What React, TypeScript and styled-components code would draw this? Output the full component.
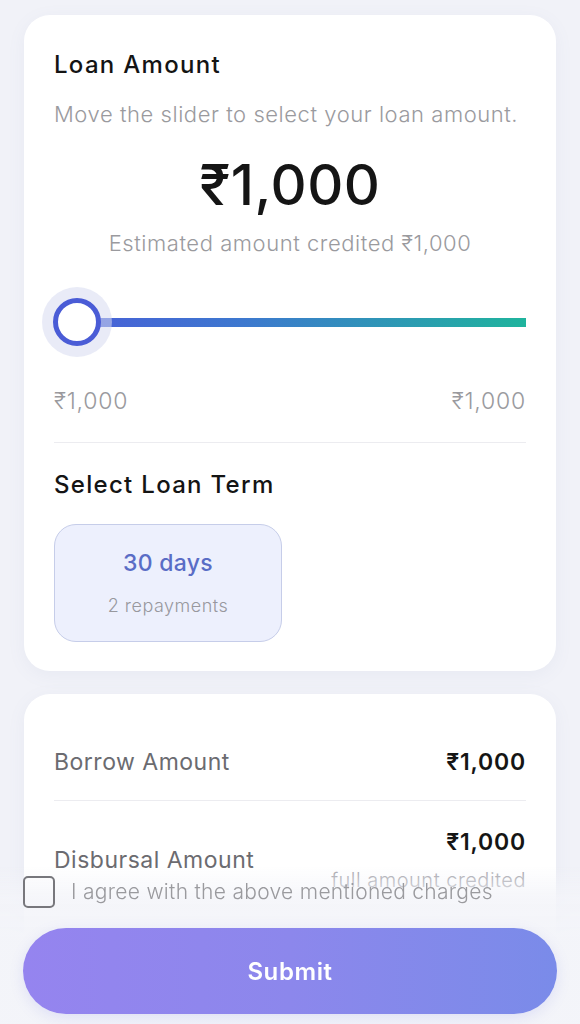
import React, { useState } from 'react';
import styled, { createGlobalStyle } from 'styled-components';

const GlobalStyle = createGlobalStyle`
  * { box-sizing: border-box; }
  body {
    margin: 0;
    background: #f1f2f8;
    font-family: Inter, "Noto Sans", "DejaVu Sans", sans-serif;
    color: #141414;
  }
`;

const Page = styled.div`
  padding: 15px 24px 220px;
  display: flex;
  flex-direction: column;
  gap: 23px;
`;

const Card = styled.div<{ $pad?: string }>`
  background: #fff;
  border-radius: 26px;
  padding: ${({ $pad }) => $pad || '35px 30px 29px'};
  box-shadow: 0 4px 18px rgba(120, 130, 170, 0.07);
`;

const Title = styled.h2`
  margin: 0;
  font-size: 24px;
  line-height: 30px;
  font-weight: 500;
  letter-spacing: 1.3px;
`;

const Muted = styled.p<{ $center?: boolean; $mt?: number }>`
  margin: ${({ $mt }) => $mt ?? 0}px 0 0;
  font-size: 22px;
  line-height: 28px;
  font-weight: 300;
  letter-spacing: 0.55px;
  color: #9a9a9e;
  text-align: ${({ $center }) => ($center ? 'center' : 'left')};
  white-space: nowrap;
`;

const BigAmount = styled.div`
  margin-top: 25px;
  text-align: center;
  font-size: 56px;
  line-height: 64px;
  font-weight: 500;
  letter-spacing: 0.5px;
  color: #151515;
`;

const SliderWrap = styled.div`
  position: relative;
  margin-top: 29px;
  height: 72px;
  display: flex;
  align-items: center;
`;

const Track = styled.div`
  width: 100%;
  height: 9px;
  background: linear-gradient(90deg, #4a5cd9 0%, #3d78cf 40%, #1fb49d 100%);
`;

const Halo = styled.div`
  position: absolute;
  left: -12px;
  top: 1px;
  width: 70px;
  height: 70px;
  border-radius: 50%;
  background: rgba(215, 219, 240, 0.55);
  display: flex;
  align-items: center;
  justify-content: center;
`;

const Thumb = styled.div`
  width: 48px;
  height: 48px;
  border-radius: 50%;
  background: #fff;
  border: 5px solid #4a5cd6;
`;

const RangeRow = styled.div`
  margin-top: 29px;
  display: flex;
  justify-content: space-between;
  font-size: 23px;
  line-height: 28px;
  font-weight: 300;
  letter-spacing: 0.8px;
  color: #9a9a9e;
`;

const Divider = styled.div`
  height: 1px;
  background: #ececf0;
  margin: 27px 0;
`;

const TermCard = styled.button<{ $active?: boolean }>`
  margin-top: 24px;
  width: 228px;
  height: 118px;
  border-radius: 22px;
  background: ${({ $active }) => ($active ? '#edf0fd' : '#fff')};
  border: 1.5px solid ${({ $active }) => ($active ? '#c6cde9' : '#e4e4ea')};
  display: flex;
  flex-direction: column;
  align-items: center;
  justify-content: center;
  gap: 18px;
  padding: 0;
  font-family: inherit;
  cursor: pointer;
`;

const TermDays = styled.span`
  font-size: 23px;
  line-height: 28px;
  font-weight: 500;
  letter-spacing: 0.3px;
  color: #5a6dc6;
`;

const TermSub = styled.span`
  font-size: 18px;
  line-height: 22px;
  font-weight: 300;
  letter-spacing: 0.5px;
  color: #98989e;
`;

const Row = styled.div<{ $last?: boolean }>`
  display: flex;
  justify-content: space-between;
  align-items: center;
  padding: ${({ $last }) => ($last ? '26px 0' : '23px 0')};
  border-bottom: ${({ $last }) => ($last ? 'none' : '1px solid #ececf0')};
`;

const RowLabel = styled.span`
  font-size: 23px;
  line-height: 30px;
  font-weight: 400;
  letter-spacing: 0.5px;
  color: #6b6b70;
`;

const RowValueCol = styled.div`
  display: flex;
  flex-direction: column;
  align-items: flex-end;
`;

const RowValue = styled.span`
  font-size: 23px;
  line-height: 30px;
  font-weight: 600;
  letter-spacing: 0.8px;
  color: #151515;
`;

const RowSub = styled.span`
  margin-top: 10px;
  font-size: 20px;
  line-height: 26px;
  font-weight: 300;
  letter-spacing: 0.5px;
  color: #a2a2a8;
`;

const Footer = styled.div`
  position: fixed;
  left: 0;
  right: 0;
  bottom: 0;
  padding: 10px 23px 10px;
  background: linear-gradient(
    180deg,
    rgba(246, 247, 251, 0) 0%,
    rgba(243, 244, 249, 0.8) 20%,
    rgba(243, 244, 249, 0.97) 45%
  );
`;

const AgreeRow = styled.label`
  display: flex;
  align-items: center;
  gap: 16px;
  cursor: pointer;
`;

const Box = styled.span<{ $checked: boolean }>`
  width: 32px;
  height: 32px;
  border-radius: 5px;
  border: 2px solid #77777c;
  background: ${({ $checked }) => ($checked ? '#7f88ea' : 'transparent')};
  flex-shrink: 0;
`;

const AgreeText = styled.span`
  font-size: 21px;
  line-height: 28px;
  font-weight: 300;
  letter-spacing: 0.3px;
  color: #9a9a9e;
  white-space: nowrap;
`;

const SubmitButton = styled.button`
  margin-top: 20px;
  width: 100%;
  height: 86px;
  border: none;
  border-radius: 43px;
  background: linear-gradient(90deg, #9584ef 0%, #8c87ec 50%, #7a8be9 100%);
  color: #fff;
  font-family: inherit;
  font-size: 24px;
  font-weight: 600;
  letter-spacing: 0.6px;
  cursor: pointer;
  box-shadow: 0 4px 14px rgba(120, 125, 220, 0.18);
`;

const App: React.FC = () => {
  const [agreed, setAgreed] = useState(false);

  return (
    <>
      <GlobalStyle />
      <Page>
        <Card>
          <Title>Loan Amount</Title>
          <Muted $mt={20}>Move the slider to select your loan amount.</Muted>
          <BigAmount>₹1,000</BigAmount>
          <Muted $center $mt={12}>Estimated amount credited ₹1,000</Muted>
          <SliderWrap>
            <Track />
            <Halo>
              <Thumb />
            </Halo>
          </SliderWrap>
          <RangeRow>
            <span>₹1,000</span>
            <span>₹1,000</span>
          </RangeRow>
          <Divider />
          <Title>Select Loan Term</Title>
          <TermCard $active>
            <TermDays>30 days</TermDays>
            <TermSub>2 repayments</TermSub>
          </TermCard>
        </Card>

        <Card $pad="30px 30px 120px">
          <Row>
            <RowLabel>Borrow Amount</RowLabel>
            <RowValue>₹1,000</RowValue>
          </Row>
          <Row $last>
            <RowLabel>Disbursal Amount</RowLabel>
            <RowValueCol>
              <RowValue>₹1,000</RowValue>
              <RowSub>full amount credited</RowSub>
            </RowValueCol>
          </Row>
        </Card>
      </Page>

      <Footer>
        <AgreeRow onClick={() => setAgreed(!agreed)}>
          <Box $checked={agreed} />
          <AgreeText>I agree with the above mentioned charges</AgreeText>
        </AgreeRow>
        <SubmitButton>Submit</SubmitButton>
      </Footer>
    </>
  );
};

export default App;
